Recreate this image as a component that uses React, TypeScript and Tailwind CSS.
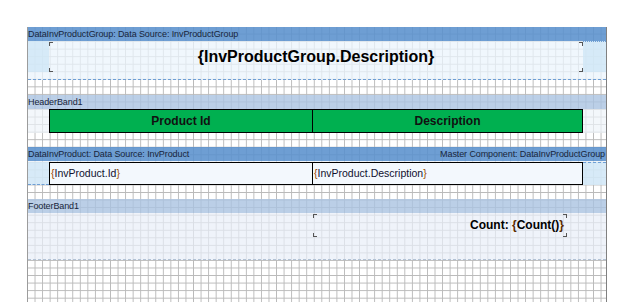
import React from "react";

const gridBg =
  "[background-image:linear-gradient(to_right,#bababa_1px,transparent_1px),linear-gradient(to_bottom,#bababa_1px,transparent_1px)] [background-size:7.56px_7.56px] [background-position:-1px_-1px]";

function Corners({ left = true, right = true }: { left?: boolean; right?: boolean }) {
  return (
    <>
      {left && (
        <>
          <span className="absolute left-0 top-[1px] w-[4px] h-[4px] border-l border-t border-[#555]" />
          <span className="absolute left-0 bottom-0 w-[4px] h-[4px] border-l border-b border-[#555]" />
        </>
      )}
      {right && (
        <>
          <span className="absolute right-0 top-[1px] w-[4px] h-[4px] border-r border-t border-[#555]" />
          <span className="absolute right-0 bottom-0 w-[4px] h-[4px] border-r border-b border-[#555]" />
        </>
      )}
    </>
  );
}

function DataBar({ left, right }: { left: string; right?: string }) {
  return (
    <div className="h-[14px] shrink-0 bg-[#5a91cde0] text-[9px] leading-[14px] tracking-[-0.1px] text-[#18253a] flex justify-between whitespace-nowrap">
      <span>{left}</span>
      {right && <span className="pr-px">{right}</span>}
    </div>
  );
}

function LightBar({ label }: { label: string }) {
  return (
    <div className="h-[14px] shrink-0 bg-[#aac3e1cc] text-[9px] leading-[14px] tracking-[-0.1px] text-[#18253a] whitespace-nowrap">
      <span>{label}</span>
    </div>
  );
}

function Expr({ text }: { text: string }) {
  return (
    <>
      <span className="text-[#9a4a00]">{"{"}</span>
      <span className="text-[#10102e]">{text}</span>
      <span className="text-[#9a4a00]">{"}"}</span>
    </>
  );
}

export default function App() {
  return (
    <div className="w-[634px] h-[302px] bg-white overflow-hidden pt-[27px] pl-[27px] font-['Liberation_Sans',Arial,sans-serif]">
      <div
        className={`w-[580px] h-[275px] border-l border-r border-l-[#9c9c9c] border-r-[#808080] flex flex-col ${gridBg}`}
      >
        {/* Data band: InvProductGroup */}
        <DataBar left="DataInvProductGroup: Data Source: InvProductGroup" />
        <div className="h-[39px] shrink-0 bg-[#ebf4fcbf] border-b border-dashed border-[#6f9fd5]">
          <div className="flex h-[31px]">
            <div className="w-[21px] bg-[#cde6f5bf]" />
            <div className="relative w-[534px] flex items-center justify-center">
              <Corners />
              <span className="text-[16px] font-bold text-black leading-none pt-[1px]">
                {"{InvProductGroup.Description}"}
              </span>
            </div>
            <div className="flex-1 bg-[#cde6f5bf] border-t border-dotted border-[#6f9fd5]" />
          </div>
        </div>

        <div className="h-[15px] shrink-0" />

        {/* Header band */}
        <LightBar label="HeaderBand1" />
        <div className="h-[24px] shrink-0 flex bg-[#eef3fab3]">
          <div className="w-[21px]" />
          <div className="w-[264px] h-[24px] border border-black bg-[#00b050] flex items-center justify-center text-[12px] font-bold text-[#111]">
            Product Id
          </div>
          <div className="w-[270px] h-[24px] border-t border-r border-b border-black bg-[#00b050] flex items-center justify-center text-[12px] font-bold text-[#111]">
            Description
          </div>
        </div>

        <div className="h-[14px] shrink-0" />

        {/* Data band: InvProduct */}
        <DataBar
          left="DataInvProduct: Data Source: InvProduct"
          right="Master Component: DataInvProductGroup"
        />
        <div className="h-[24px] shrink-0 flex pt-px bg-[#ebf4fc99]">
          <div className="w-[21px] h-[23px] bg-[#cde6f5bf] border-b border-dashed border-[#6f9fd5]" />
          <div className="w-[264px] h-[23px] border border-black bg-[#f3f8fd] flex items-center pl-px text-[10.5px] leading-none">
            <Expr text="InvProduct.Id" />
          </div>
          <div className="w-[270px] h-[23px] border-t border-r border-b border-black bg-[#f3f8fd] flex items-center pl-px text-[10.5px] leading-none">
            <Expr text="InvProduct.Description" />
          </div>
          <div className="flex-1 h-[23px] bg-[#cde6f5bf] border-t border-dashed border-[#6f9fd5]" />
        </div>

        <div className="h-[14px] shrink-0" />

        {/* Footer band */}
        <LightBar label="FooterBand1" />
        <div className="h-[47px] shrink-0 bg-[#e8eef8b3] border-b border-dashed border-[#b3c3d6]">
          <div className="ml-[285px] w-[254px] h-[24px] relative flex items-center justify-end pr-[3px] text-[12px] font-bold text-black">
            <Corners />
            <span>
              Count: <span className="text-[#5a2a00]">{"{"}</span>Count()<span className="text-[#5a2a00]">{"}"}</span>
            </span>
          </div>
        </div>

        <div className="flex-1" />
      </div>
    </div>
  );
}
